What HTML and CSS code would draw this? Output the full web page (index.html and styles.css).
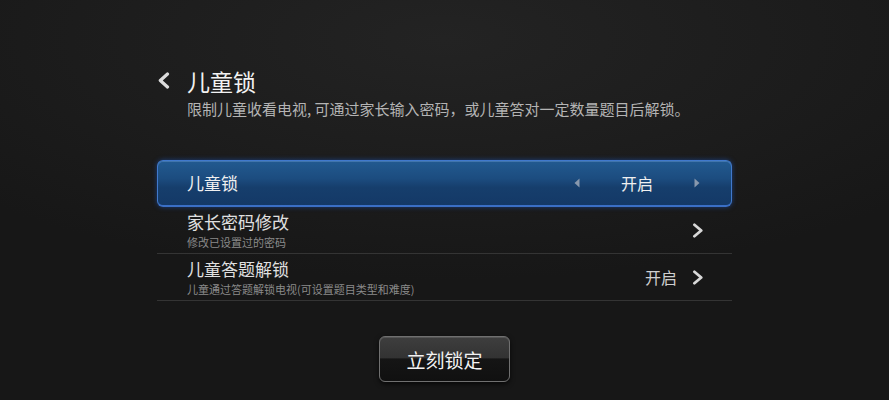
FILE: index.html
```html
<!DOCTYPE html>
<html lang="zh-CN">
<head>
<meta charset="utf-8">
<title>儿童锁</title>
<link rel="stylesheet" href="styles.css">
</head>
<body>
<div class="page">
  <header class="head">
    <svg class="back" width="13" height="17" viewBox="0 0 13 17"><path d="M10.5 2 L3.3 8.5 L10.5 15" fill="none" stroke="#dcdcdc" stroke-width="3.2" stroke-linecap="round" stroke-linejoin="round"/></svg>
    <div class="head-text">
      <h1 class="title">儿童锁</h1>
      <p class="desc">限制儿童收看电视, 可通过家长输入密码，或儿童答对一定数量题目后解锁。</p>
    </div>
  </header>
  <ul class="list">
    <li class="row row-active">
      <span class="row-title">儿童锁</span>
      <span class="switcher">
        <svg class="tri" width="6" height="10" viewBox="0 0 6 10"><polygon points="5.5,0.5 0.5,5 5.5,9.5" fill="#8898ad"/></svg>
        <span class="switch-value">开启</span>
        <svg class="tri" width="6" height="10" viewBox="0 0 6 10"><polygon points="0.5,0.5 5.5,5 0.5,9.5" fill="#8898ad"/></svg>
      </span>
    </li>
    <li class="row">
      <span class="row-text">
        <span class="row-title">家长密码修改</span>
        <span class="row-sub">修改已设置过的密码</span>
      </span>
      <span class="row-end">
        <svg class="chev" width="12" height="15" viewBox="0 0 12 15"><path d="M2.4 1.8 L9.2 7.5 L2.4 13.2" fill="none" stroke="#d8d8d8" stroke-width="2.8" stroke-linecap="round" stroke-linejoin="round"/></svg>
      </span>
    </li>
    <li class="row">
      <span class="row-text">
        <span class="row-title">儿童答题解锁</span>
        <span class="row-sub">儿童通过答题解锁电视(可设置题目类型和难度)</span>
      </span>
      <span class="row-end">
        <span class="row-value">开启</span>
        <svg class="chev" width="12" height="15" viewBox="0 0 12 15"><path d="M2.4 1.8 L9.2 7.5 L2.4 13.2" fill="none" stroke="#d8d8d8" stroke-width="2.8" stroke-linecap="round" stroke-linejoin="round"/></svg>
      </span>
    </li>
  </ul>
  <div class="actions">
    <button class="btn">立刻锁定</button>
  </div>
</div>
</body>
</html>
```

FILE: styles.css
```css
* { box-sizing: border-box; }
html, body { margin: 0; padding: 0; }
body {
  width: 889px;
  height: 400px;
  overflow: hidden;
  background: radial-gradient(ellipse 70% 60% at 50% 10%, #232323 0%, #1c1c1c 60%, #171717 100%);
  font-family: "Noto Sans CJK SC", "Noto Sans", sans-serif;
  color: #e8e8e8;
}
.page {
  width: 575px;
  margin: 0 auto;
  padding-top: 70px;
}
.head {
  display: flex;
  align-items: flex-start;
}
.back {
  flex: none;
  margin-top: 2px;
  margin-right: 17px;
}
.head-text { display: flex; flex-direction: column; }
.title {
  margin: 0;
  font-size: 23px;
  line-height: 23px;
  font-weight: 400;
  color: #f2f2f2;
}
.desc {
  margin: 7px 0 0;
  font-size: 15px;
  line-height: 18px;
  color: #b4b4b4;
  white-space: nowrap;
}
.list {
  list-style: none;
  margin: 42px 0 0;
  padding: 0;
}
.row {
  height: 47px;
  display: flex;
  align-items: center;
  justify-content: space-between;
  padding: 0 28px 0 30px;
  border-bottom: 1px solid #343434;
}
.row-active {
  border: 1px solid #4079cc;
  border-bottom: 2px solid #3a6fc6;
  border-radius: 6px;
  padding: 0 31px 0 29px;
  background: linear-gradient(180deg, #225a90 0%, #1c4c7f 40%, #163e6c 60%, #143967 100%);
  box-shadow: 0 0 5px rgba(30, 80, 170, 0.7), inset 0 1px 0 rgba(120, 170, 230, 0.35);
}
.row-active .row-title { color: #f0f0f0; }
.row-text {
  display: flex;
  flex-direction: column;
  gap: 5px;
}
.row-title {
  font-size: 17px;
  line-height: 18px;
  color: #e0e0e0;
  white-space: nowrap;
}
.row-sub {
  font-size: 11px;
  line-height: 12px;
  color: #8a8a8a;
  white-space: nowrap;
}
.switcher {
  display: flex;
  align-items: center;
  justify-content: space-between;
  width: 126px;
}
.switch-value {
  font-size: 16px;
  line-height: 20px;
  color: #f0f0f0;
}
.row-end {
  display: flex;
  align-items: center;
  gap: 15px;
}
.row-value {
  font-size: 16px;
  line-height: 20px;
  color: #cfcfcf;
}
.chev { display: block; }
.tri { display: block; }
.actions {
  display: flex;
  justify-content: center;
  margin-top: 35px;
}
.btn {
  width: 131px;
  height: 46px;
  border: 1px solid #707070;
  border-radius: 6px;
  background: linear-gradient(180deg, #3e3e3e 0%, #333333 47%, #151515 50%, #101010 100%);
  box-shadow: 0 2px 5px rgba(0, 0, 0, 0.7), inset 0 1px 0 rgba(255, 255, 255, 0.12);
  font-family: "Noto Sans CJK SC", "Noto Sans", sans-serif;
  font-size: 19px;
  color: #f2f2f2;
  padding: 0;
}
```
